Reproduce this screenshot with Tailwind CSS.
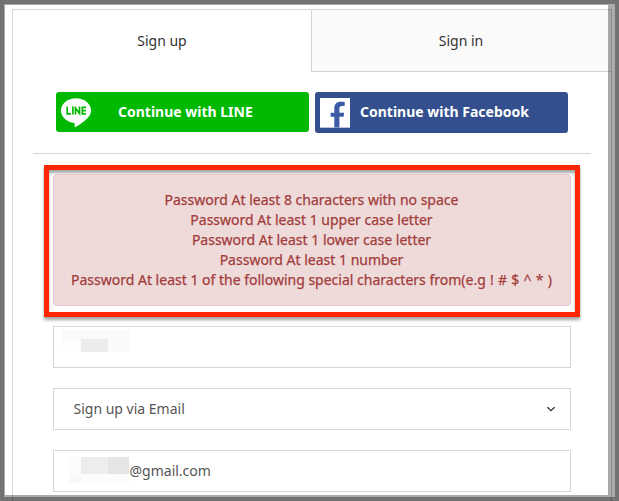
<!DOCTYPE html>
<html lang="en">
  <head>
    <meta charset="UTF-8" />
    <meta name="viewport" content="width=device-width, initial-scale=1.0" />
    <title>Sign up</title>
    <script src="https://cdn.jsdelivr.net/npm/@tailwindcss/browser@4"></script>
  </head>

  <body
    class="relative h-[501px] w-[619px] overflow-hidden bg-white pt-[9px] pl-3 font-['Noto_Sans',sans-serif] text-sm text-[#333]"
  >
    <div class="h-[500px] w-[600px] border border-[#d6d6d6]">
      <!-- Tabs -->
      <div class="grid h-[62px] grid-cols-2 text-center">
        <button class="pr-px pb-0.5 leading-[59px]">Sign up</button>
        <button
          class="-ml-px border-b border-l border-[#d2d2d2] bg-[#fafafa] pr-px leading-[61px]"
        >
          Sign in
        </button>
      </div>

      <!-- Social buttons -->
      <div
        class="flex items-start gap-1.5 pt-5 pl-[43px] leading-10 font-bold text-white"
      >
        <button
          class="flex h-10 w-[253px] items-center rounded-[3px] bg-[#00b900] pl-[5px]"
        >
          <svg class="h-[30px] w-[30px]" viewBox="0 0 30 30">
            <path
              fill="#fff"
              d="M15 1.300C6.700 1.300 0 6.800 0 13.500c0 6.100 5.200 11.200 12.300 12.200 1.300.2 1.600.7 1.500 1.900l-.2 1.700c0 .8.500.900 1.300.5 3.500-1.900 10-6 13-10.200 1.500-2 2.100-4 2.100-6.100C30 6.800 23.300 1.300 15 1.300z"
            />
            <path
              fill="none"
              stroke="#00b900"
              stroke-width="1.700"
              d="M6.200 9.600v7.200H10M11.900 9.600v8M14.500 17.600V11l4 5.400V9.600M25 10.400h-3.700v6.400H25M21.500 13.600h3.300"
            />
          </svg>
          <span class="ml-[27px]">Continue with LINE</span>
        </button>
        <button
          class="flex h-[41px] w-[253px] items-center rounded-[3px] bg-[#334f8d] pl-[5px]"
        >
          <svg class="h-[30px] w-[30px]" viewBox="0 0 30 30">
            <path fill="#fff" d="M0 0h30v29H0z" />
            <path fill="#b9c4dc" d="M0 29h30v1H0z" />
            <path
              fill="#3b5ba5"
              d="M14.300 29.500V18.800H10.600v-4h3.700V10.500c0-4.300 2.300-6.700 6.500-6.700 1.700 0 2.900.1 3.900.3v4h-2.600c-2.100 0-2.700 1-2.700 2.600v4.100h4.800l-.6 4h-4.200v10.700z"
            />
          </svg>
          <span class="-mt-px ml-[10px]">Continue with Facebook</span>
        </button>
      </div>

      <hr class="mx-5 mt-5 border-[#d6d6d6]" />

      <!-- Highlighted password rules -->
      <div
        class="mt-[11px] ml-[31px] h-[152px] w-[536px] border-[5px] border-[#ff2600] p-1 pb-[7px] shadow-[0_3px_3px_rgba(0,0,0,0.35),inset_0_3px_3px_rgba(0,0,0,0.35)]"
      >
        <div
          class="h-[132px] rounded border border-[#e6c5cb] bg-[#efdada] pt-[15px] pr-px text-center leading-5 text-[#a23c3a] [-webkit-text-stroke:0.25px_#a23c3a]"
        >
          <p>Password At least 8 characters with no space</p>
          <p>Password At least 1 upper case letter</p>
          <p>Password At least 1 lower case letter</p>
          <p>Password At least 1 number</p>
          <p>
            Password At least 1 of the following special characters from(e.g<span
              class="[word-spacing:0.6px]"
            >
              ! # $ ^ * )</span
            >
          </p>
        </div>
      </div>

      <!-- Fields -->
      <div class="mt-[9px] ml-10 w-[518px] space-y-5 text-[#555]">
        <div class="h-[42px] border border-[#d6d6d6] pt-[3px] pl-2">
          <svg class="h-[24px] w-[68px]" viewBox="0 0 68 24">
            <path fill="#fafafa" d="M0 0h68v22H0z" />
            <path fill="#fdfdfd" d="M0 9h19v13H0z" />
            <path fill="#ececec" d="M19 9h27v13H19z" />
          </svg>
        </div>
        <div
          class="flex h-[42px] items-center justify-between border border-[#d6d6d6] pr-[15px] pl-[19.500px]"
        >
          <span>Sign up via Email</span>
          <svg
            class="h-2 w-2"
            viewBox="0 0 8 8"
            fill="none"
            stroke="#333"
            stroke-width="1.300"
          >
            <path d="M.4 2.200 4 5.600l3.600-3.400" />
          </svg>
        </div>
        <div
          class="flex h-[42px] items-center border border-[#d6d6d6] pl-[15px]"
        >
          <svg class="-mt-0.5 h-[26px] w-[60px]" viewBox="0 0 60 26">
            <path fill="#fcfcfc" d="M0 0h12v17H0zM12 17h48v8H12z" />
            <path fill="#f9f9f9" d="M0 17h12v9H0z" />
            <path fill="#ededed" d="M12 0h27v17H12z" />
            <path fill="#e5e5e5" d="M39 0h21v17H39z" />
          </svg>
          <span class="ml-[0.500px]">@gmail.com</span>
        </div>
      </div>
    </div>

    <!-- Window frame over the page edges -->
    <div class="absolute inset-0 border-4 border-black/55">
      <div
        class="h-full border-t border-r-[7px] border-b-2 border-l border-black/33"
      ></div>
    </div>
  </body>
</html>
